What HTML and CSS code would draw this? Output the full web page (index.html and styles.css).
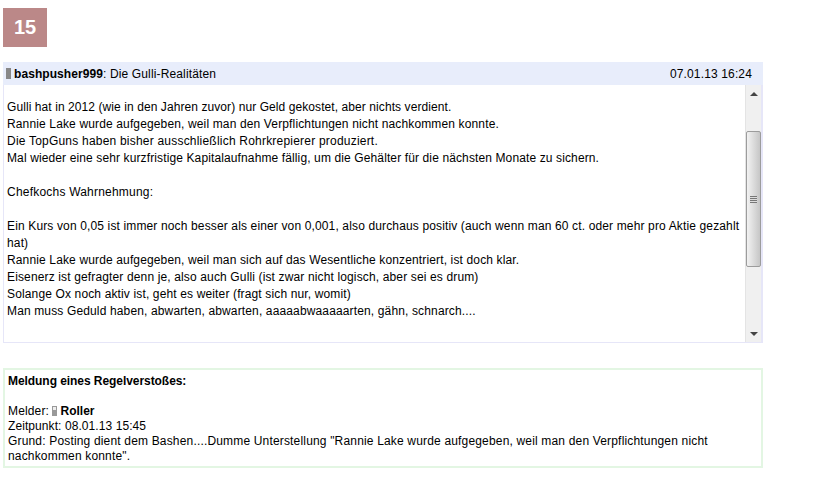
FILE: index.html
```html
<!DOCTYPE html>
<html lang="de">
<head>
<meta charset="utf-8">
<title>Posting 15</title>
<link rel="stylesheet" href="styles.css">
</head>
<body>
<div class="badge">15</div>
<section class="post">
  <header class="post-head">
    <div class="post-title"><span class="bar"></span><b class="author">bashpusher999</b>: Die Gulli-Realitäten</div>
    <div class="post-date">07.01.13 16:24</div>
  </header>
  <div class="post-frame">
    <div class="post-body">
      <p class="line tight">Gulli hat in 2012 (wie in den Jahren zuvor) nur Geld gekostet, aber nichts verdient.</p>
      <p class="line">Rannie Lake wurde aufgegeben, weil man den Verpflichtungen nicht nachkommen konnte.</p>
      <p class="line wide">Die TopGuns haben bisher ausschließlich Rohrkrepierer produziert.</p>
      <p class="line mid">Mal wieder eine sehr kurzfristige Kapitalaufnahme fällig, um die Gehälter für die nächsten Monate zu sichern.</p>
      <p class="line">&nbsp;</p>
      <p class="line wide">Chefkochs Wahrnehmung:</p>
      <p class="line">&nbsp;</p>
      <p class="line">Ein Kurs von 0,05 ist immer noch besser als einer von 0,001, also durchaus positiv (auch wenn man 60 ct. oder mehr pro Aktie gezahlt hat)</p>
      <p class="line">Rannie Lake wurde aufgegeben, weil man sich auf das Wesentliche konzentriert, ist doch klar.</p>
      <p class="line">Eisenerz ist gefragter denn je, also auch Gulli (ist zwar nicht logisch, aber sei es drum)</p>
      <p class="line">Solange Ox noch aktiv ist, geht es weiter (fragt sich nur, womit)</p>
      <p class="line">Man muss Geduld haben, abwarten, abwarten, aaaaabwaaaaarten, gähn, schnarch....</p>
    </div>
    <div class="scrollbar">
      <div class="arrow-box"><span class="arrow-up"></span></div>
      <div class="spacer-top"></div>
      <div class="thumb"><span class="grip"></span></div>
      <div class="spacer-bottom"></div>
      <div class="arrow-box"><span class="arrow-down"></span></div>
    </div>
  </div>
</section>
<section class="report">
  <div class="report-title">Meldung eines Regelverstoßes:</div>
  <div class="report-gap">&nbsp;</div>
  <div>Melder: <span class="mini"><span class="mini-top"></span></span><b>Roller</b></div>
  <div class="tight">Zeitpunkt: 08.01.13 15:45</div>
  <div class="reason">Grund: Posting dient dem Bashen....Dumme Unterstellung "Rannie Lake wurde aufgegeben, weil man den Verpflichtungen nicht nachkommen konnte".</div>
</section>
</body>
</html>
```

FILE: styles.css
```css
html, body {
  margin: 0;
  padding: 0;
  background: #fff;
}
body {
  padding: 8px 0 0 3px;
  width: 760px;
  font-family: "Liberation Sans", Arial, sans-serif;
  font-size: 12px;
  letter-spacing: 0.14px;
  color: #000;
}
b {
  letter-spacing: 0;
}
.author {
  letter-spacing: 0.07px;
}
.badge {
  width: 44px;
  height: 39px;
  background: #bb8888;
  color: #fff;
  font-size: 20px;
  font-weight: bold;
  letter-spacing: 0;
  line-height: 39px;
  text-align: center;
}
.post {
  margin-top: 15px;
}
.post-head {
  display: flex;
  justify-content: space-between;
  align-items: center;
  height: 23px;
  padding: 0 11px 0 3px;
  background: #e8edfb;
}
.post-title {
  display: flex;
  align-items: center;
  white-space: pre;
}
.bar {
  width: 5px;
  height: 11px;
  margin-right: 3px;
  background: #888;
}
.post-frame {
  display: flex;
  height: 258px;
  box-sizing: border-box;
  border: 1px solid #e6e6f8;
  border-top: 0;
  border-right-width: 2px;
}
.post-body {
  flex: 1;
  min-width: 0;
  padding: 14px 4px 0 3px;
  line-height: 17px;
  overflow: hidden;
}
.line {
  margin: 0;
}
.tight {
  letter-spacing: 0.08px;
}
.mid {
  letter-spacing: 0.12px;
}
.wide {
  letter-spacing: 0.21px;
}
.reason {
  letter-spacing: 0.17px;
}
.scrollbar {
  display: flex;
  flex-direction: column;
  width: 16px;
  flex: none;
  box-sizing: border-box;
  background: #f0f0f0;
  border-left: 1px solid #e4e4e4;
}
.arrow-box {
  display: flex;
  align-items: center;
  justify-content: center;
  height: 17px;
  flex: none;
}
.arrow-up {
  width: 0;
  height: 0;
  border-left: 4px solid transparent;
  border-right: 4px solid transparent;
  border-bottom: 4px solid #444;
}
.arrow-down {
  width: 0;
  height: 0;
  border-left: 4px solid transparent;
  border-right: 4px solid transparent;
  border-top: 4px solid #444;
}
.spacer-top {
  height: 29px;
  flex: none;
}
.thumb {
  display: flex;
  align-items: center;
  justify-content: center;
  height: 136px;
  flex: none;
  box-sizing: border-box;
  border: 1px solid #9c9c9c;
  border-radius: 2px;
  background: linear-gradient(to right, #f2f2f2, #c6c6c6);
}
.grip {
  width: 7px;
  height: 7px;
  background: repeating-linear-gradient(to bottom, #777 0, #777 1px, #ddd 1px, #ddd 2px);
}
.spacer-bottom {
  flex: 1;
}
.report {
  margin-top: 25px;
  box-sizing: border-box;
  height: 100px;
  padding: 4px 3px 0 3px;
  border: 2px solid #e3f6e3;
  line-height: 15px;
}
.report-title {
  font-weight: bold;
  letter-spacing: -0.06px;
}
.report-gap {
  height: 15px;
}
.mini {
  display: inline-block;
  width: 5px;
  height: 10px;
  margin-right: 3px;
  background: #999;
  vertical-align: -1px;
}
.mini-top {
  display: block;
  width: 3px;
  height: 3px;
  margin: 1px;
  background: #eee;
}
```
